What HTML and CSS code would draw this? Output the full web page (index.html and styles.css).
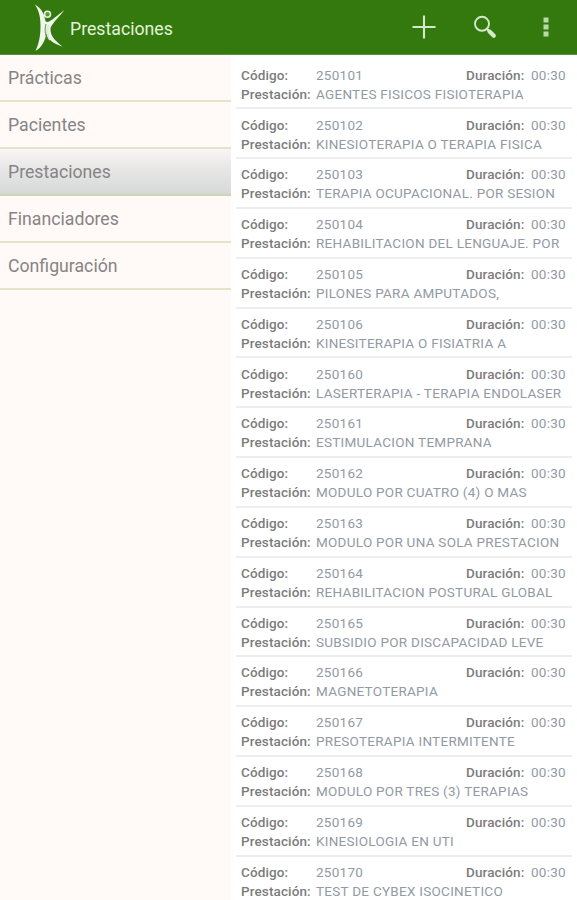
FILE: index.html
```
<!DOCTYPE html>
<html lang="es">
<head>
<meta charset="utf-8">
<title>Prestaciones</title>
<link rel="stylesheet" href="styles.css">
</head>
<body>
<header class="bar">
  <svg class="logo" width="32" height="50" viewBox="0 0 32 50" aria-hidden="true">
    <path d="M1 0.500C7 4 10 9 11.500 17C14 21 22 12 30.500 6C25 13 19 18 16.500 24C16 31 20 36 28.500 42.500C20 40 14 36 12.500 29C11 37 8 43 1.500 47C5 39 6.500 32 6.500 22C6.500 13 5 7 1 0.500Z" fill="#f1f7ed"/>
    <path d="M14.500 21C12.500 26 13 31 16 36" fill="none" stroke="#dcebd3" stroke-width="2"/>
    <path d="M12 20C10.500 25 11 31 13.500 35" fill="none" stroke="#5f9540" stroke-width="1"/>
    <circle cx="13.500" cy="10.300" r="3" fill="#5f9540" stroke="#e8f3e1" stroke-width="1.600"/>
  </svg>
  <h1 class="title">Prestaciones</h1>
  <div class="actions">
    <svg width="24" height="24" viewBox="0 0 24 24"><path d="M12 .5V23.500M.5 12H23.500" stroke="#d3eac8" stroke-width="2.100"/></svg>
    <svg width="24" height="24" viewBox="0 0 24 24"><circle cx="9" cy="8.800" r="7" fill="none" stroke="#d3eac8" stroke-width="1.900"/><path d="M14 14L16 16" stroke="#d3eac8" stroke-width="2.200"/><path d="M16.500 16.500L20.800 20.800" stroke="#d3eac8" stroke-width="4.200" stroke-linecap="round"/></svg>
    <svg width="6" height="20" viewBox="0 0 6 20"><path d="M.5 .5h5v5h-5zM.5 7.500h5v5h-5zM.5 14.500h5v5h-5z" fill="#b9d9aa"/></svg>
  </div>
</header>
<div class="body">
  <nav class="side">
    <a class="item">Prácticas</a>
    <a class="item">Pacientes</a>
    <a class="item active">Prestaciones</a>
    <a class="item">Financiadores</a>
    <a class="item">Configuración</a>
  </nav>
  <main class="list">
    <div class="row"><b>Código:</b><span>250101</span><b>Duración:</b><span>00:30</span><b>Prestación:</b><span class="name">AGENTES FISICOS FISIOTERAPIA</span></div>
    <div class="row"><b>Código:</b><span>250102</span><b>Duración:</b><span>00:30</span><b>Prestación:</b><span class="name">KINESIOTERAPIA O TERAPIA FISICA</span></div>
    <div class="row"><b>Código:</b><span>250103</span><b>Duración:</b><span>00:30</span><b>Prestación:</b><span class="name">TERAPIA OCUPACIONAL. POR SESION</span></div>
    <div class="row"><b>Código:</b><span>250104</span><b>Duración:</b><span>00:30</span><b>Prestación:</b><span class="name">REHABILITACION DEL LENGUAJE. POR</span></div>
    <div class="row"><b>Código:</b><span>250105</span><b>Duración:</b><span>00:30</span><b>Prestación:</b><span class="name">PILONES PARA AMPUTADOS,</span></div>
    <div class="row"><b>Código:</b><span>250106</span><b>Duración:</b><span>00:30</span><b>Prestación:</b><span class="name">KINESITERAPIA O FISIATRIA A</span></div>
    <div class="row"><b>Código:</b><span>250160</span><b>Duración:</b><span>00:30</span><b>Prestación:</b><span class="name">LASERTERAPIA - TERAPIA ENDOLASER</span></div>
    <div class="row"><b>Código:</b><span>250161</span><b>Duración:</b><span>00:30</span><b>Prestación:</b><span class="name">ESTIMULACION TEMPRANA</span></div>
    <div class="row"><b>Código:</b><span>250162</span><b>Duración:</b><span>00:30</span><b>Prestación:</b><span class="name">MODULO POR CUATRO (4) O MAS</span></div>
    <div class="row"><b>Código:</b><span>250163</span><b>Duración:</b><span>00:30</span><b>Prestación:</b><span class="name">MODULO POR UNA SOLA PRESTACION</span></div>
    <div class="row"><b>Código:</b><span>250164</span><b>Duración:</b><span>00:30</span><b>Prestación:</b><span class="name">REHABILITACION POSTURAL GLOBAL</span></div>
    <div class="row"><b>Código:</b><span>250165</span><b>Duración:</b><span>00:30</span><b>Prestación:</b><span class="name">SUBSIDIO POR DISCAPACIDAD LEVE</span></div>
    <div class="row"><b>Código:</b><span>250166</span><b>Duración:</b><span>00:30</span><b>Prestación:</b><span class="name">MAGNETOTERAPIA</span></div>
    <div class="row"><b>Código:</b><span>250167</span><b>Duración:</b><span>00:30</span><b>Prestación:</b><span class="name">PRESOTERAPIA INTERMITENTE</span></div>
    <div class="row"><b>Código:</b><span>250168</span><b>Duración:</b><span>00:30</span><b>Prestación:</b><span class="name">MODULO POR TRES (3) TERAPIAS</span></div>
    <div class="row"><b>Código:</b><span>250169</span><b>Duración:</b><span>00:30</span><b>Prestación:</b><span class="name">KINESIOLOGIA EN UTI</span></div>
    <div class="row"><b>Código:</b><span>250170</span><b>Duración:</b><span>00:30</span><b>Prestación:</b><span class="name">TEST DE CYBEX ISOCINETICO</span></div>
  </main>
</div>
</body>
</html>
```
FILE: styles.css
```
* { box-sizing: border-box; }
body {
  margin: 0;
  height: 900px;
  overflow: hidden;
  display: flex;
  flex-direction: column;
  background: #fff;
  font-family: Roboto, "Liberation Sans", sans-serif;
}
.bar {
  height: 55px;
  flex: none;
  display: flex;
  align-items: center;
  padding: 0 28px 0 34px;
  background: #34790d;
  border-bottom: 1px solid #5b8f3e;
}
.logo { flex: none; margin-top: 3px; }
.title {
  margin: 4px 0 0 4px;
  font-size: 17.7px;
  font-weight: 400;
  color: #e4f3dc;
}
.actions {
  margin-left: auto;
  display: flex;
  align-items: center;
  gap: 37px;
}
.actions svg:last-child { margin-left: 9px; }
.body { flex: 1; min-height: 0; display: flex; }
.side { width: 231px; flex: none; background: #fff9f8; }
.item {
  display: flex;
  align-items: center;
  height: 47px;
  padding-left: 8px;
  border-bottom: 2px solid #e1e6c9;
  font-size: 17.7px;
  color: #868484;
}
.active {
  background: linear-gradient(#f8f5f4, #e5e5e5 50%, #d7d8d8);
  border-bottom-color: #ccd6b4;
}
.list { flex: 1; padding: 4.6px 5px 0; }
.row {
  height: 49.82px;
  display: grid;
  grid-template-columns: 75px 1fr 65px 36px;
  grid-template-rows: 19px 19px;
  align-items: center;
  padding: 5.6px 5px 0;
  border-bottom: 2px solid #eceeef;
  font-size: 13.5px;
  letter-spacing: .27px;
  color: #929aa4;
  white-space: nowrap;
}
.row b { font-size: 13.5px; letter-spacing: .12px; font-weight: 500; color: #7c7c7c; }
.name { grid-column: 2 / -1; }
```
